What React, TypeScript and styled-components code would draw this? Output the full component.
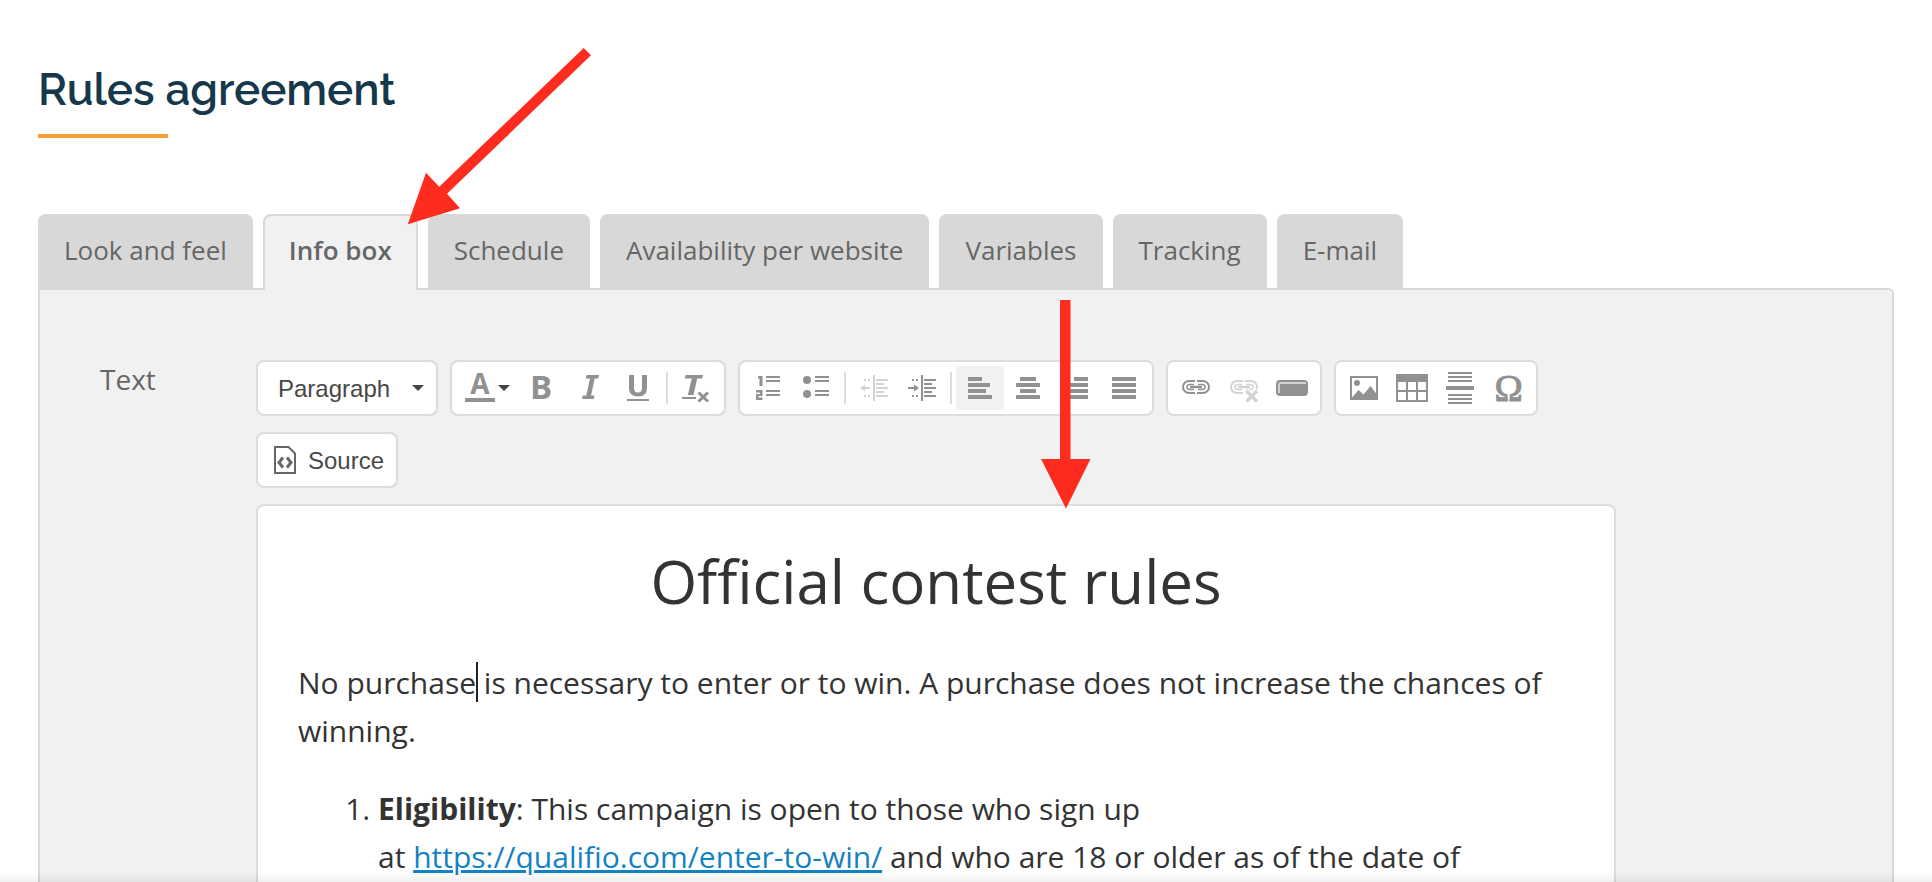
import React from "react";
import styled, { createGlobalStyle } from "styled-components";

const GlobalStyle = createGlobalStyle`
  *, *::before, *::after { box-sizing: border-box; }
  html, body { margin: 0; background: #fff; }
  body { font-family: "Open Sans", "Noto Sans", sans-serif; color: #333; }
  h1, h2, p, ol { margin: 0; padding: 0; font-weight: 400; }
`;

const Page = styled.main`
  position: relative;
  height: 100vh;
  min-height: 640px;
  overflow: hidden;
  display: flex;
  flex-direction: column;
  padding: 62px 38px 0;
`;

const Title = styled.h1`
  font-family: Raleway, Lato, sans-serif;
  font-size: 44px;
  line-height: 56px;
  && { font-weight: 600; }
  color: #15384b;
  padding-bottom: 16px;

  &::after {
    content: "";
    display: block;
    width: 130px;
    height: 4px;
    margin-top: 16px;
    background: #f9a033;
  }
`;

const Tabs = styled.nav`
  display: flex;
  gap: 10px;
  padding-top: 60px;
`;

const Tab = styled.button<{ $active?: boolean }>`
  height: ${(p) => (p.$active ? 76 : 74)}px;
  margin-bottom: ${(p) => (p.$active ? -2 : 0)}px;
  padding: 0 ${(p) => (p.$active ? "24px 6px" : "26px 2px")};
  border: 0 solid #d8d8d8;
  border-width: ${(p) => (p.$active ? "2px 2px 0" : "0")};
  border-radius: 8px 8px 0 0;
  background: ${(p) => (p.$active ? "#f1f1f1" : "#d8d8d8")};
  color: #666;
  font: ${(p) => (p.$active ? 600 : 400)} 26px/36px "Open Sans", sans-serif;
  white-space: nowrap;
  position: relative;
`;

const Panel = styled.section`
  flex: 1;
  display: flex;
  padding: 70px 60px 0;
  border: 2px solid #d8d8d8;
  border-bottom: 0;
  border-radius: 0 6px 0 0;
  background: #f1f1f1;
`;

const FieldLabel = styled.div`
  flex: 0 0 156px;
  font-size: 28px;
  line-height: 38px;
  color: #666;
`;

const Field = styled.div`
  flex: 1 1 0;
  min-width: 0;
  max-width: 1360px;
  display: flex;
  flex-direction: column;
  gap: 16px;
`;

const Toolbar = styled.div`
  display: flex;
  flex-wrap: wrap;
  gap: 16px 12px;
`;

const Group = styled.div`
  display: flex;
  align-items: center;
  height: 56px;
  padding: 4px;
  border: 2px solid #dcdcdc;
  border-radius: 8px;
  background: #fff;
`;

const Divider = styled.span`
  width: 2px;
  height: 32px;
  margin: 0 4px;
  background: #dcdcdc;
`;

const ToolButton = styled.button<{ $on?: boolean }>`
  display: flex;
  align-items: center;
  height: 44px;
  padding: 0 8px;
  border: 0;
  border-radius: 4px;
  background: ${(p) => (p.$on ? "#f1f1f1" : "transparent")};
  color: #919191;
  &:disabled { color: #d3d3d3; }
`;

const Glyph = styled.svg`
  display: block;
  width: 32px;
  height: 32px;
  fill: currentColor;
  overflow: visible;
`;

const Caret = styled.svg`
  display: block;
  width: 12px;
  height: 6px;
  margin-left: 2px;
  fill: #444;
  pointer-events: none;
`;

const Combo = styled.label`
  display: flex;
  align-items: center;
  width: 170px;
  height: 44px;
  padding-right: 8px;
`;

const ComboSelect = styled.select`
  appearance: none;
  flex: 1;
  min-width: 0;
  height: 44px;
  padding: 2px 0 0 16px;
  border: 0;
  background: transparent;
  color: #484848;
  font: 24px/28px "Liberation Sans", Arial, sans-serif;
`;

const SourceText = styled.span`
  padding: 2px 0 0 6px;
  color: #484848;
  font: 24px/28px "Liberation Sans", Arial, sans-serif;
`;

const Editor = styled.article`
  flex: 1;
  padding: 39px 40px 0;
  border: 2px solid #dcdcdc;
  border-bottom: 0;
  border-radius: 8px 8px 0 0;
  background: #fff;
  font-size: 30px;
  line-height: 48px;
`;

const DocHeading = styled.h2`
  margin-bottom: 42px;
  text-align: center;
  font-size: 60px;
  line-height: 72px;
`;

const Paragraph = styled.p`
  margin-bottom: 30px;
`;

const TextCursor = styled.span`
  position: relative;
  &::after {
    content: "";
    position: absolute;
    left: 0;
    top: 0;
    width: 2px;
    height: 40px;
    background: #222;
  }
`;

const Rules = styled.ol`
  && { padding-left: 80px; }
`;

const Strong = styled.strong`
  font-weight: 700;
`;

const Link = styled.a`
  color: #1482c0;
  text-decoration: underline;
  white-space: nowrap;
`;

const BottomShade = styled.div`
  position: absolute;
  left: 0;
  right: 0;
  bottom: 0;
  height: 10px;
  background: linear-gradient(rgba(0, 0, 0, 0), rgba(0, 0, 0, 0.06));
`;

const Pointer = styled.svg<{ $x: number; $y: number }>`
  position: absolute;
  left: ${(p) => p.$x}px;
  top: ${(p) => p.$y}px;
  fill: #fe2c1e;
  pointer-events: none;
`;

const tabs = ["Look and feel", "Info box", "Schedule", "Availability per website", "Variables", "Tracking", "E-mail"];

const stripes = (rows: number[][]) => rows.map(([x, w], i) => <rect key={i} x={x} y={5 + i * 6} width={w} height="4" />);

const indentLines = (
  <>
    <rect x="15" y="3" width="2" height="26" />
    <path d="M18 7h12v2H18zM18 11h8v2h-8zM18 15h12v2H18zM18 19h8v2h-8zM18 23h12v2H18zM6 7h2v2H6zM10 7h2v2h-2zM6 23h2v2H6zM10 23h2v2h-2z" />
  </>
);

const chain = (
  <g fill="none" stroke="currentColor" strokeWidth="2">
    <path d="M15 9H9a6 6 0 0 0 0 12h6M17 9h6a6 6 0 0 1 0 12h-6" />
    <path d="M14 12.500H9.500a2.500 2.500 0 0 0 0 5H14M18 12.500h4.500a2.500 2.500 0 0 1 0 5H18" strokeWidth="1.500" />
    <path d="M10 15h12" strokeWidth="2.500" />
  </g>
);

const icons: Record<string, React.ReactNode> = {
  color: (
    <>
      <text x="16" y="22" textAnchor="middle" fontFamily="Open Sans" fontWeight="700" fontSize="28">A</text>
      <rect x="1" y="26" width="30" height="4" />
    </>
  ),
  bold: <text x="4" y="27" fontFamily="Open Sans" fontWeight="700" fontSize="33">B</text>,
  italic: <path d="M12.500 3H25l-.700 3.500h-3.600L17 23.500h3.500L19.800 27H8l.700-3.500h3.600L16 6.500h-4.200z" />,
  underline: (
    <>
      <path d="M7 3h5v13q0 4.500 4 4.500t4-4.500V3h5v13q0 8.500-9 8.500T7 16z" />
      <rect x="5" y="27" width="22" height="2" />
    </>
  ),
  removeFormat: (
    <>
      <path d="M5.500 3H23l-.800 3.500h-5L13.500 23H7.800l4-16.500H4.700z" />
      <rect x="2" y="25" width="14" height="2" />
      <path d="M18.500 20.500l9.500 9M28 20.500l-9.500 9" stroke="currentColor" strokeWidth="3" />
    </>
  ),
  numbered: (
    <>
      <path d="M6 4h4.500v10h-3V6.500H6zM4 18h6.500v6h-4v1.500h4V28H4v-6h4v-1.500H4z" />
      <path d="M14 4h14v2H14zM14 8h14v2H14zM14 18h14v2H14zM14 22h14v2H14z" />
    </>
  ),
  bulleted: (
    <>
      <circle cx="7" cy="8" r="4" />
      <circle cx="7" cy="22" r="4" />
      <path d="M15 4h14v2H15zM15 8h14v2H15zM15 18h14v2H15zM15 22h14v2H15z" />
    </>
  ),
  outdent: (
    <>
      {indentLines}
      <path d="M2 16l5-3.500V15h5v2H7v2.500z" />
    </>
  ),
  indent: (
    <>
      {indentLines}
      <path d="M13 16l-5-3.500V15H2v2h6v2.500z" />
    </>
  ),
  left: stripes([[4, 14], [4, 22], [4, 18], [4, 24]]),
  center: stripes([[8, 16], [4, 24], [8, 16], [4, 24]]),
  right: stripes([[14, 14], [6, 22], [10, 18], [4, 24]]),
  justify: stripes([[4, 24], [4, 24], [4, 24], [4, 24]]),
  link: chain,
  unlink: (
    <>
      {chain}
      <path d="M18 18.500l11.500 11M29.500 18.500L18 29.500" stroke="#fff" strokeWidth="6" />
      <path d="M18.500 19l10.500 10.500M29 19L18.500 29.500" stroke="currentColor" strokeWidth="3.500" />
    </>
  ),
  button: (
    <>
      <rect x="0" y="8" width="32" height="16" rx="4" />
      <path d="M3 21v-8q0-2 2-2h25" fill="none" stroke="#d3d3d3" strokeWidth="2" />
    </>
  ),
  image: (
    <>
      <path fillRule="evenodd" d="M2 4h28v24H2zM4 6v20h24V6z" />
      <circle cx="9" cy="11" r="3" />
      <path d="M4 25.500l6.500-7.500 5 4.500L22.500 14l6 8v5H4z" />
    </>
  ),
  table: (
    <path fillRule="evenodd" d="M0 2h32v28H0zM2 10v8h8v-8zM12 10v8h8v-8zM22 10v8h8v-8zM2 20v8h8v-8zM12 20v8h8v-8zM22 20v8h8v-8z" />
  ),
  rule: <path d="M4 0h24v2H4zM4 4h24v2H4zM4 8h24v2H4zM2 14h28v4H2zM4 22h24v2H4zM4 26h24v2H4zM4 30h24v2H4z" />,
  omega: (
    <text x="16.500" y="29" textAnchor="middle" fontFamily="Liberation Serif" fontSize="38" stroke="currentColor" strokeWidth="1">Ω</text>
  ),
  source: (
    <g fill="none" stroke="#666" strokeWidth="2">
      <path d="M5 3h13.500L25 9.500V29H5z" />
      <path d="M13 13.500L9 18.500l4 5M17 13.500l4 5-4 5" strokeWidth="3" />
    </g>
  ),
};

const Tool = ({ icon, label, on, disabled, children }: {
  icon: string; label?: string; on?: boolean; disabled?: boolean; children?: React.ReactNode;
}) => (
  <ToolButton type="button" aria-label={label} aria-pressed={on} $on={on} disabled={disabled}>
    <Glyph viewBox="0 0 32 32" aria-hidden="true">{icons[icon]}</Glyph>
    {children}
  </ToolButton>
);

const DownCaret = () => (
  <Caret viewBox="0 0 12 6" aria-hidden="true"><path d="M0 0h12L6 6z" /></Caret>
);

export default function App() {
  return (
    <>
      <GlobalStyle />
      <Page>
        <Title>Rules agreement</Title>
        <Tabs>
          {tabs.map((name) => (
            <Tab key={name} type="button" $active={name === "Info box"}>{name}</Tab>
          ))}
        </Tabs>
        <Panel>
          <FieldLabel id="text-label">Text</FieldLabel>
          <Field>
            <Toolbar role="toolbar" aria-labelledby="text-label">
              <Group>
                <Combo>
                  <ComboSelect aria-label="Paragraph format" defaultValue="Paragraph">
                    <option>Paragraph</option>
                  </ComboSelect>
                  <DownCaret />
                </Combo>
              </Group>
              <Group>
                <Tool icon="color" label="Text colour"><DownCaret /></Tool>
                <Tool icon="bold" label="Bold" />
                <Tool icon="italic" label="Italic" />
                <Tool icon="underline" label="Underline" />
                <Divider />
                <Tool icon="removeFormat" label="Remove format" />
              </Group>
              <Group>
                <Tool icon="numbered" label="Numbered list" />
                <Tool icon="bulleted" label="Bulleted list" />
                <Divider />
                <Tool icon="outdent" label="Decrease indent" disabled />
                <Tool icon="indent" label="Increase indent" />
                <Divider />
                <Tool icon="left" label="Align left" on />
                <Tool icon="center" label="Centre" />
                <Tool icon="right" label="Align right" />
                <Tool icon="justify" label="Justify" />
              </Group>
              <Group>
                <Tool icon="link" label="Link" />
                <Tool icon="unlink" label="Unlink" disabled />
                <Tool icon="button" label="Button" />
              </Group>
              <Group>
                <Tool icon="image" label="Image" />
                <Tool icon="table" label="Table" />
                <Tool icon="rule" label="Horizontal line" />
                <Tool icon="omega" label="Special character" />
              </Group>
              <Group>
                <Tool icon="source"><SourceText>Source</SourceText></Tool>
              </Group>
            </Toolbar>
            <Editor>
              <DocHeading>Official contest rules</DocHeading>
              <Paragraph>
                No purchase<TextCursor /> is necessary to enter or to win. A purchase does not increase the chances of winning.
              </Paragraph>
              <Rules>
                <li>
                  <Strong>Eligibility</Strong>: This campaign is open to those who sign up at&nbsp;<Link href="https://qualifio.com/enter-to-win/">https://qualifio.com/enter-to-win/</Link> and who are 18 or older as of the date of
                </li>
              </Rules>
            </Editor>
          </Field>
        </Panel>
        <Pointer $x={406} $y={46} width="188" height="180" viewBox="406 46 188 180" aria-hidden="true">
          <path d="M583.700 48L591 55.300 447 193.700 460 208.300 407.800 224.300 426 172.700 439.200 186.700z" />
        </Pointer>
        <Pointer $x={1040} $y={300} width="52" height="210" viewBox="1040 300 52 210" aria-hidden="true">
          <path d="M1060 300h10.500v159h20L1066 508.500 1041 459h19z" />
        </Pointer>
        <BottomShade />
      </Page>
    </>
  );
}
